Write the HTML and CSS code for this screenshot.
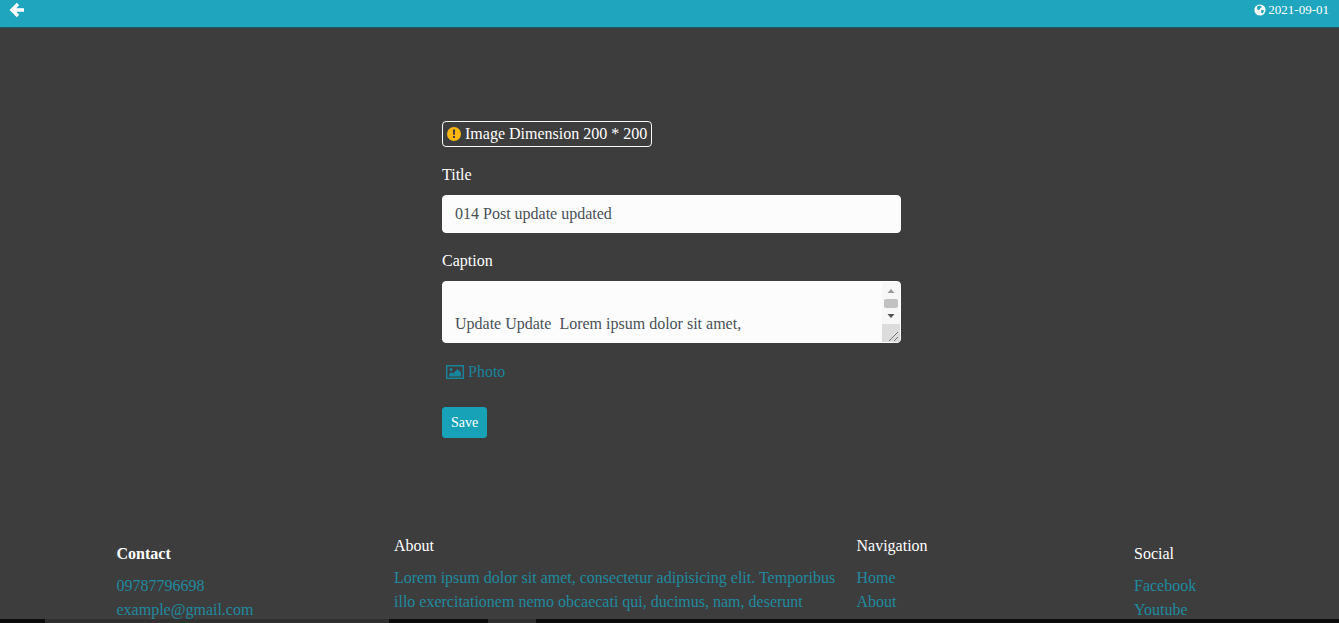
FILE: index.html
```html
<!DOCTYPE html>
<html lang="en">
<head>
<meta charset="utf-8">
<meta name="viewport" content="width=device-width, initial-scale=1">
<title>Edit post</title>
<link rel="stylesheet" href="styles.css">
</head>
<body>
<header class="topbar">
  <a class="back" href="#" aria-label="Back">
    <svg viewBox="0 0 16 16" width="16" height="16" fill="none" stroke="#fff" stroke-width="3.4"><path d="M9 2 3 8l6 6M3.500 8H15"/></svg>
  </a>
  <div class="date">
    <svg viewBox="0 0 12 12" width="12" height="12"><circle cx="6" cy="6" r="5.6" fill="#fff"/><path d="M3 2.500 6 1.600 8 3 6.200 4.400 5 6.200 3.200 5.200zM7.200 6l3 .4-1.400 3L7 8.600z" fill="#1fa5bd"/></svg>
    <time datetime="2021-09-01">2021-09-01</time>
  </div>
</header>
<main class="main">
  <form class="form">
    <div class="note">
      <svg viewBox="0 0 14 14" width="14" height="14"><circle cx="7" cy="7" r="7" fill="#ffb70f"/><path d="M5.800 2.600h2.400L7.800 8H6.200zM6 9h2v2H6z" fill="#3d3d3d"/></svg>
      <span>Image Dimension 200 * 200</span>
    </div>
    <label class="label" for="title">Title</label>
    <input class="control" id="title" type="text" value="014 Post update updated">
    <label class="label" for="caption">Caption</label>
    <div class="area">
      <textarea class="control caption" id="caption" rows="2">

Update Update  Lorem ipsum dolor sit amet,</textarea>
      <svg class="scroll" viewBox="0 0 18 60" width="18" height="60" aria-hidden="true">
        <path d="M0 0h18v60H0z" fill="#f7f7f7"/>
        <path d="m5.500 11 3.500-4 3.500 4z" fill="#999"/>
        <rect x="2" y="17" width="14" height="9" rx="2" fill="#c1c1c1"/>
        <path d="m5.500 32 3.500 4 3.500-4z" fill="#505050"/>
        <path d="M0 42h18v18H0z" fill="#dcdcdc"/>
        <path d="m7 59 9-9M12 59l4-4" stroke="#777" stroke-width="1"/>
      </svg>
    </div>
    <button class="photo" type="button">
      <svg viewBox="0 0 18 14" width="18" height="14"><path d="M.7.7h16.600v12.600H.7z" fill="none" stroke="#17849b" stroke-width="1.4"/><circle cx="5" cy="4.5" r="1.5" fill="#17849b"/><path d="M3 11.500V9l2.500-2L7 8.500 11.500 4 15 7.500v4z" fill="#17849b"/></svg>
      <span>Photo</span>
    </button>
    <button class="save" type="submit">Save</button>
  </form>
</main>
<footer class="footer">
  <section class="col low">
    <h2 class="heading strong">Contact</h2>
    <a href="#">09787796698</a>
    <a href="#">example@gmail.com</a>
  </section>
  <section class="col">
    <h2 class="heading">About</h2>
    <p class="about">Lorem ipsum dolor sit amet, consectetur adipisicing elit. Temporibus illo exercitationem nemo obcaecati qui, ducimus, nam, deserunt</p>
  </section>
  <nav class="col">
    <h2 class="heading">Navigation</h2>
    <a href="#">Home</a>
    <a href="#">About</a>
  </nav>
  <section class="col low">
    <h2 class="heading">Social</h2>
    <a href="#">Facebook</a>
    <a href="#">Youtube</a>
  </section>
</footer>
<div class="strip"></div>
</body>
</html>
```

FILE: styles.css
```css
* { box-sizing: border-box; }
body {
  margin: 0;
  height: 100vh;
  overflow: hidden;
  background: #3d3d3d;
  color: #fff;
  font: 16px/24px "Liberation Serif", "Times New Roman", serif;
}
svg { display: block; flex: none; }
button, input, textarea { font: inherit; }
.topbar {
  display: flex;
  justify-content: space-between;
  align-items: flex-start;
  height: 28px;
  padding: 0 10px 0 9px;
  background: #1fa5bd;
  border-bottom: 1px solid #1b5961;
}
.back { padding-top: 2px; }
.date {
  display: flex;
  align-items: center;
  gap: 2px;
  font-size: 13px;
  line-height: 20px;
}
.main { padding: 93px 12px 96px 16px; }
.form {
  display: flex;
  flex-direction: column;
  align-items: flex-start;
  max-width: 459px;
  margin: 0 auto;
}
.note {
  display: flex;
  align-items: center;
  gap: 4px;
  height: 26px;
  padding: 0 4px;
  border: 1px solid #f8f9fa;
  border-radius: 4px;
}
.label { margin: 16px 0 8px; }
.control {
  display: block;
  width: 100%;
  padding: 6px 12px;
  border: 1px solid #fff;
  border-radius: 4px;
  background: #fcfcfc;
  color: #495057;
}
.area { position: relative; width: 100%; }
.caption {
  height: 62px;
  resize: none;
  scrollbar-width: none;
}
.scroll {
  position: absolute;
  top: 1px;
  right: 1px;
}
.photo {
  display: flex;
  align-items: center;
  gap: 4px;
  margin: 17px 0 23px;
  padding: 0 4px;
  border: 0;
  background: none;
  color: #17849b;
}
.save {
  padding: 4px 8px;
  border: 1px solid #17a2b8;
  border-radius: 3px;
  background: #17a2b8;
  color: #fff;
  font-size: 14px;
  line-height: 21px;
}
.footer {
  display: grid;
  grid-template-columns: 3fr 5fr 3fr 1fr;
  max-width: 1110px;
  margin: 0 auto;
}
.col {
  display: flex;
  flex-direction: column;
  align-items: flex-start;
  padding-left: 2px;
}
.low { padding-top: 8px; }
.heading {
  margin: 0 0 8px;
  font-size: 16px;
  font-weight: 400;
}
.strong { font-weight: 700; }
.col a, .about {
  color: #218a9f;
  text-decoration: none;
}
.about { margin: 0; }
.strip {
  position: fixed;
  inset: auto 0 0;
  height: 4px;
  background: linear-gradient(90deg, #0c0c0c 45px, #303030 45px 389px, #0c0c0c 389px 488px, #303030 488px 536px, #0c0c0c 536px);
}
```
